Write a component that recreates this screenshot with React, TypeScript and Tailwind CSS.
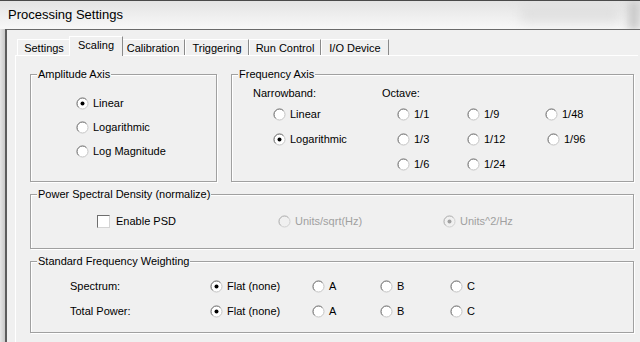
import React from "react";

function Radio({ checked = false, disabled = false }: { checked?: boolean; disabled?: boolean }) {
  return (
    <svg width="13" height="13" viewBox="0 0 13 13" className="shrink-0">
      <circle cx="6.5" cy="6.5" r="5.5" fill={disabled ? "#f0f0f0" : "#ffffff"} stroke={disabled ? "#d0d0d0" : "#c4c4c4"} />
      <path d="M2.6 10.4 A5.5 5.5 0 0 1 10.4 2.6" fill="none" stroke={disabled ? "#b8b8b8" : "#7a7a7a"} strokeWidth="1" />
      {checked && <circle cx="6.5" cy="6.5" r="2" fill={disabled ? "#a0a0a0" : "#000000"} />}
    </svg>
  );
}

function RadioItem({ label, checked = false, disabled = false, gap = "gap-[4px]" }: { label: string; checked?: boolean; disabled?: boolean; gap?: string }) {
  return (
    <div className={`flex items-center h-[13px] ${gap}`}>
      <Radio checked={checked} disabled={disabled} />
      <span className={`leading-[13px] whitespace-nowrap ${disabled ? "text-[#a0a0a0]" : "text-black"}`}>{label}</span>
    </div>
  );
}

function Group({ title, className = "", children }: { title: string; className?: string; children?: React.ReactNode }) {
  return (
    <div className={`border border-[#a0a0a0] shadow-[inset_1px_1px_0_#ffffff,1px_1px_0_#ffffff] flex flex-col ${className}`}>
      <span className="-mt-[7px] ml-[6px] px-[1px] w-fit bg-[#f0f0f0] leading-[13px] whitespace-nowrap">{title}</span>
      {children}
    </div>
  );
}

function Tab({ label, w, selected = false }: { label: string; w: string; selected?: boolean }) {
  if (selected) {
    return (
      <div className={`${w} -mx-[2px] -mb-px h-[20px] relative z-10 bg-[#f0f0f0] border-t border-l border-white border-r border-r-[#8a8a8a] flex justify-center pt-[2px] leading-[13px]`}>
        {label}
      </div>
    );
  }
  return (
    <div className={`${w} h-[16px] border-t border-l border-white border-r border-r-[#8a8a8a] flex justify-center pt-[2px] leading-[13px]`}>
      {label}
    </div>
  );
}

export default function App() {
  return (
    <div className="w-[640px] h-[342px] overflow-hidden flex flex-col bg-[#f0f0f0] text-[11px] text-black font-['Liberation_Sans',Arial,sans-serif]">
      {/* Title bar */}
      <div className="h-[29px] shrink-0 relative border-t border-[#4a4a4a] bg-gradient-to-b from-[#e4e4e4] via-[#eeeeee] to-[#f8f8f8] flex items-center pl-[8px] overflow-hidden">
        <span className="text-[13px] leading-[16px] text-black font-['Liberation_Sans',Arial,sans-serif]">Processing Settings</span>
        <div className="absolute left-[520px] top-[4px] w-[100px] h-[18px] rounded-[4px] bg-[#d8d8d8] blur-[6px] opacity-60" />
        <div className="absolute right-0 top-0 w-[12px] h-[29px] bg-[#c9c9c9] blur-[4px]" />
      </div>
      {/* Body */}
      <div className="flex flex-1 min-h-0">
        <div className="w-[5px] shrink-0 bg-gradient-to-r from-[#e6e6e6] to-[#c8c8c8]" />
        <div className="w-[2px] shrink-0 bg-[#5c5c5c]" />
        <div className="flex-1 flex flex-col border-t border-[#6a6a6a] pt-[6px] pl-[8px] pr-[2px]">
          {/* Tabs */}
          <div className="flex items-end h-[19px] pl-[2px]">
            <Tab label="Settings" w="w-[54px]" />
            <Tab label="Scaling" w="w-[54px]" selected />
            <Tab label="Calibration" w="w-[64px]" />
            <Tab label="Triggering" w="w-[64px]" />
            <Tab label="Run Control" w="w-[72px]" />
            <Tab label="I/O Device" w="w-[68px]" />
          </div>
          {/* Tab page */}
          <div className="flex-1 border-t border-l border-white pl-[14px] pr-[3px] pt-[18px] flex flex-col">
            {/* Row 1 */}
            <div className="flex gap-[14px]">
              <Group title="Amplitude Axis" className="w-[187px] h-[108px]">
                <div className="flex flex-col gap-[11px] mt-[16px] pl-[45px]">
                  <RadioItem label="Linear" checked />
                  <RadioItem label="Logarithmic" />
                  <RadioItem label="Log Magnitude" />
                </div>
              </Group>
              <Group title="Frequency Axis" className="w-[403px] h-[108px]">
                <div className="flex mt-[6px] pl-[21px]">
                  <div className="w-[129px] flex flex-col">
                    <span className="leading-[13px]">Narrowband:</span>
                    <div className="flex flex-col gap-[12px] mt-[8px] pl-[20px]">
                      <RadioItem label="Linear" />
                      <RadioItem label="Logarithmic" checked />
                    </div>
                  </div>
                  <div className="flex flex-col">
                    <span className="leading-[13px]">Octave:</span>
                    <div className="grid grid-cols-[70px_78px_80px] gap-y-[12px] mt-[8px] pl-[15px]">
                      <RadioItem label="1/1" />
                      <RadioItem label="1/9" />
                      <RadioItem label="1/48" />
                      <RadioItem label="1/3" />
                      <RadioItem label="1/12" />
                      <div className="pl-[2px]"><RadioItem label="1/96" /></div>
                      <RadioItem label="1/6" />
                      <RadioItem label="1/24" />
                    </div>
                  </div>
                </div>
              </Group>
            </div>
            {/* PSD */}
            <Group title="Power Spectral Density (normalize)" className="w-[604px] h-[55px] mt-[12px]">
              <div className="flex items-center mt-[14px] pl-[66px]">
                <div className="w-[181px] flex items-center gap-[6px] h-[13px]">
                  <div className="w-[13px] h-[13px] bg-white border border-t-[#6e6e6e] border-l-[#6e6e6e] border-r-[#d4d4d4] border-b-[#d4d4d4]" />
                  <span className="leading-[13px]">Enable PSD</span>
                </div>
                <div className="w-[165px]">
                  <RadioItem label="Units/sqrt(Hz)" disabled />
                </div>
                <RadioItem label="Units^2/Hz" checked disabled />
              </div>
            </Group>
            {/* SFW */}
            <Group title="Standard Frequency Weighting" className="w-[604px] h-[72px] mt-[12px]">
              <div className="flex flex-col gap-[12px] mt-[12px] pl-[39px]">
                {["Spectrum:", "Total Power:"].map((l) => (
                  <div key={l} className="flex items-center h-[13px]">
                    <span className="w-[140px] leading-[13px]">{l}</span>
                    <div className="w-[102px]"><RadioItem label="Flat (none)" checked /></div>
                    <div className="w-[68px]"><RadioItem label="A" /></div>
                    <div className="w-[70px]"><RadioItem label="B" /></div>
                    <RadioItem label="C" />
                  </div>
                ))}
              </div>
            </Group>
          </div>
        </div>
      </div>
    </div>
  );
}
